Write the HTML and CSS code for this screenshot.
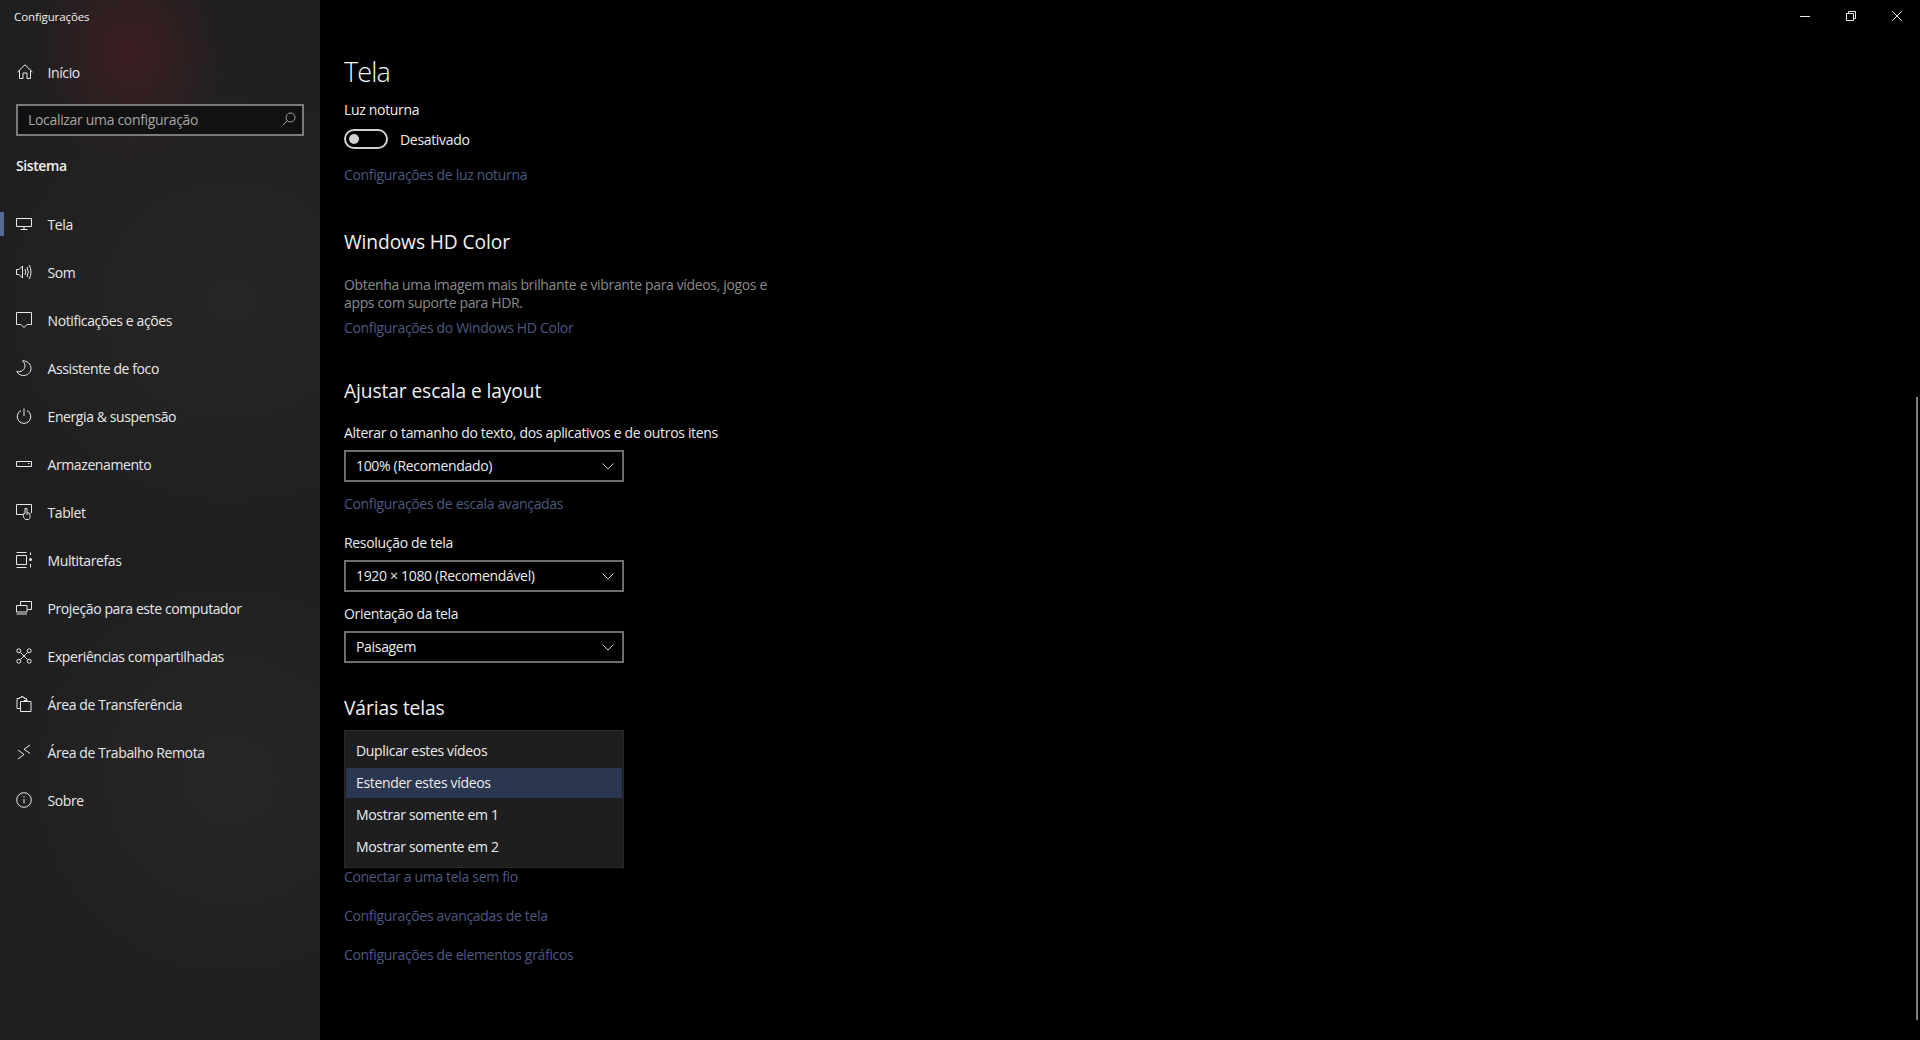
FILE: index.html
```html
<!DOCTYPE html>
<html lang="pt-BR">
<head>
<meta charset="utf-8">
<title>Configurações</title>
<link rel="stylesheet" href="styles.css">
</head>
<body>
<div class="app">
  <aside class="sidebar">
    <div class="app-title">Configurações</div>
    <div class="nav-item home">
      <svg class="icon home-icon" viewBox="0 0 16 16"><path d="M0.5 8 L8 0.8 L15.5 8 M2.5 6.5 V14.5 H6 V9 H10 V14.5 H13.5 V6.5"/></svg>
      <span class="nav-label">Início</span>
    </div>
    <div class="search">
      <span class="search-text">Localizar uma configuração</span>
      <svg class="search-icon" viewBox="0 0 14 14"><circle cx="8.5" cy="5.5" r="4.5"/><path d="M5.3 8.7 L1 13"/></svg>
    </div>
    <div class="section-title">Sistema</div>
    <nav class="nav">
      <div class="nav-item selected">
        <svg class="icon" viewBox="0 0 16 16"><path d="M0.5 2.5 H15.5 V10.5 H0.5 Z M8 10.5 V13.5 M4.5 13.5 H11.5"/></svg>
        <span class="nav-label">Tela</span>
      </div>
      <div class="nav-item">
        <svg class="icon" viewBox="0 0 16 16"><path d="M0.5 5.5 H3 L6.5 2 V14 L3 10.5 H0.5 Z M9 5 Q10.5 8 9 11 M11 3 Q13.5 8 11 13 M13.2 1 Q16.8 8 13.2 15"/></svg>
        <span class="nav-label">Som</span>
      </div>
      <div class="nav-item">
        <svg class="icon" viewBox="0 0 16 16"><path d="M0.5 0.5 H15.5 V12.5 H11 L8 15.5 L5 12.5 H0.5 Z"/></svg>
        <span class="nav-label">Notificações e ações</span>
      </div>
      <div class="nav-item">
        <svg class="icon" viewBox="0 0 16 16"><path d="M6.5 0.8 C11 0.5 15 4 15 8.5 C15 12.5 11.5 15.5 7.5 15.5 C4.5 15.5 2 14 0.8 11.5 C5.5 12.5 9 9.5 9 6 C9 4 8 2 6.5 0.8 Z"/></svg>
        <span class="nav-label">Assistente de foco</span>
      </div>
      <div class="nav-item">
        <svg class="icon" viewBox="0 0 16 16"><path d="M5 2.5 A6.8 6.8 0 1 0 11 2.5 M8 0.5 V8"/></svg>
        <span class="nav-label">Energia &amp; suspensão</span>
      </div>
      <div class="nav-item">
        <svg class="icon" viewBox="0 0 16 16"><path d="M0.5 5.5 H15.5 V10.5 H0.5 Z M12 7.5 H13.5"/></svg>
        <span class="nav-label">Armazenamento</span>
      </div>
      <div class="nav-item">
        <svg class="icon" viewBox="0 0 16 16"><path d="M7 10.5 H0.5 V0.5 H15.5 V9 M9.5 15.5 C8 14.5 7 12.5 7 10 L9 9.5 V4.5 H11 V8.5 L14 9.5 V12.5 C14 14 13.5 15 12.5 15.5 Z M11 8.5 V11"/></svg>
        <span class="nav-label">Tablet</span>
      </div>
      <div class="nav-item">
        <svg class="icon" viewBox="0 0 16 16"><path d="M0.5 0.5 H10.5 M0.5 15.5 H10.5 M0.5 3.5 H10.5 V12.5 H0.5 Z M14.5 0.5 V3 M14.5 12 V15.5"/><circle class="solid" cx="14.5" cy="7.5" r="1.5"/></svg>
        <span class="nav-label">Multitarefas</span>
      </div>
      <div class="nav-item">
        <svg class="icon" viewBox="0 0 16 16"><path d="M4.5 5 V1.5 H15.5 V9.5 H11.5 M0.5 5.5 H11 V12 H0.5 Z M0.5 14 H11"/></svg>
        <span class="nav-label">Projeção para este computador</span>
      </div>
      <div class="nav-item">
        <svg class="icon" viewBox="0 0 16 16"><circle cx="2.8" cy="2.8" r="2"/><circle cx="13.2" cy="2.8" r="2"/><circle cx="2.8" cy="13.2" r="2"/><circle cx="13.2" cy="13.2" r="2"/><path d="M4.3 4.3 L11.7 11.7 M11.7 4.3 L4.3 11.7"/></svg>
        <span class="nav-label">Experiências compartilhadas</span>
      </div>
      <div class="nav-item">
        <svg class="icon" viewBox="0 0 16 16"><path d="M4.5 12.5 H1 V2.5 H3.5 V1.5 H5.5 V0.5 H7 V1.5 H8.5 V2.5 H10.5 V5 M4.5 5.5 H15 V15.5 H4.5 Z M8 5.5 V4.5 H11.5 V5.5"/></svg>
        <span class="nav-label">Área de Transferência</span>
      </div>
      <div class="nav-item">
        <svg class="icon" viewBox="0 0 16 16"><path d="M2 6 L8 10.5 L2 15 M14 1 L8 5.3 L14 9.3"/></svg>
        <span class="nav-label">Área de Trabalho Remota</span>
      </div>
      <div class="nav-item">
        <svg class="icon" viewBox="0 0 16 16"><circle cx="8" cy="8" r="7.3"/><path d="M8 7 V11.5"/><circle class="solid" cx="8" cy="4.8" r="0.7"/></svg>
        <span class="nav-label">Sobre</span>
      </div>
    </nav>
  </aside>
  <main class="main">
    <div class="window-controls">
      <svg class="win-icon" viewBox="0 0 10 10"><path d="M0 5.5 H10"/></svg>
      <svg class="win-icon" viewBox="0 0 10 10"><path d="M0.5 2.5 H7.5 V9.5 H0.5 Z M2.5 2.5 V0.5 H9.5 V7.5 H7.5"/></svg>
      <svg class="win-icon" viewBox="0 0 10 10"><path d="M0.2 0.2 L9.8 9.8 M9.8 0.2 L0.2 9.8"/></svg>
    </div>
    <div class="content">
      <h1 class="page-title">Tela</h1>
      <div class="text mt8">Luz noturna</div>
      <div class="toggle-row">
        <span class="toggle"><span class="knob"></span></span>
        <span class="text toggle-label">Desativado</span>
      </div>
      <a class="link mt16">Configurações de luz noturna</a>

      <h2 class="heading mt43">Windows HD Color</h2>
      <p class="desc">Obtenha uma imagem mais brilhante e vibrante para vídeos, jogos e<br>apps com suporte para HDR.</p>
      <a class="link mt6">Configurações do Windows HD Color</a>

      <h2 class="heading mt39">Ajustar escala e layout</h2>
      <div class="text mt18">Alterar o tamanho do texto, dos aplicativos e de outros itens</div>
      <div class="select">
        <span>100% (Recomendado)</span>
        <svg class="chevron" viewBox="0 0 12 7"><path d="M0.5 0.5 L6 6 L11.5 0.5"/></svg>
      </div>
      <a class="link mt12">Configurações de escala avançadas</a>

      <div class="text mt19">Resolução de tela</div>
      <div class="select">
        <span>1920 × 1080 (Recomendável)</span>
        <svg class="chevron" viewBox="0 0 12 7"><path d="M0.5 0.5 L6 6 L11.5 0.5"/></svg>
      </div>
      <div class="text mt12">Orientação da tela</div>
      <div class="select">
        <span>Paisagem</span>
        <svg class="chevron" viewBox="0 0 12 7"><path d="M0.5 0.5 L6 6 L11.5 0.5"/></svg>
      </div>

      <h2 class="heading mt31">Várias telas</h2>
      <div class="menu-slot">
        <ul class="menu">
          <li class="menu-item">Duplicar estes vídeos</li>
          <li class="menu-item active">Estender estes vídeos</li>
          <li class="menu-item">Mostrar somente em 1</li>
          <li class="menu-item">Mostrar somente em 2</li>
        </ul>
      </div>
      <a class="link">Conectar a uma tela sem fio</a>
      <a class="link mt19">Configurações avançadas de tela</a>
      <a class="link mt19">Configurações de elementos gráficos</a>
    </div>
    <div class="scroll-thumb"></div>
  </main>
</div>
</body>
</html>
```
FILE: styles.css
```css
* { box-sizing: border-box; }
html, body { margin: 0; height: 100%; background: #000; overflow: hidden; }
body { font-family: "Open Sans", "Noto Sans", "Liberation Sans", sans-serif; font-size: 14px; letter-spacing: -0.32px; color: #ececec; }
.app { display: flex; height: 1040px; }

.sidebar {
  width: 320px; flex: none; padding: 0;
  background:
    radial-gradient(ellipse 100px 115px at 130px 52px, rgba(100, 28, 38, .42), rgba(100, 28, 38, 0) 100%),
    radial-gradient(ellipse 280px 260px at 230px 300px, rgba(255, 255, 255, .03), rgba(255, 255, 255, 0) 100%),
    radial-gradient(ellipse 240px 240px at 230px 780px, rgba(255, 255, 255, .035), rgba(255, 255, 255, 0) 100%),
    #1f1f1f;
}
.app-title { height: 34px; line-height: 33px; padding-left: 14px; font-size: 11.5px; letter-spacing: -0.1px; color: #f0f0f0; }
.nav-item { position: relative; display: flex; align-items: center; gap: 15.5px; height: 48px; padding: 0 0 2px 16px; letter-spacing: -0.4px; color: #e8e8e8; }
.home { margin-top: 15px; }
.icon { width: 16px; height: 16px; flex: none; fill: none; stroke: #e8e8e8; stroke-width: 1; }
.home-icon { margin-left: 1px; margin-right: -1px; }
.icon .solid { fill: #e8e8e8; stroke: none; }
.nav-label { white-space: nowrap; }
.search {
  display: flex; align-items: center; justify-content: space-between;
  width: 288px; height: 32px; margin: 7px 0 0 16px; padding: 0 6px 2px 10px;
  background: #111; border: 2px solid #7b7b7b; color: #a6a6a6;
}
.search-icon { width: 14px; height: 14px; fill: none; stroke: #a6a6a6; stroke-width: 1; }
.section-title { margin: 20px 0 0 16px; height: 20px; line-height: 20px; font-weight: 600; letter-spacing: -0.4px; color: #f0f0f0; }
.nav { margin-top: 25px; }
.selected::before { content: ""; position: absolute; left: 0; top: 11px; width: 4px; height: 24px; background: #5a6a96; }

.main { position: relative; flex: 1; min-width: 0; }
.window-controls { display: flex; justify-content: flex-end; gap: 36px; height: 32px; padding: 11px 18px 0 0; }
.win-icon { width: 10px; height: 10px; fill: none; stroke: #e6e6e6; stroke-width: 1; }
.content { display: flex; flex-direction: column; align-items: flex-start; padding: 20px 0 0 24px; }
.page-title { margin: 0; height: 40px; line-height: 39px; font-size: 27px; font-weight: 300; letter-spacing: -0.9px; color: #f6f6f6; }
.text { height: 20px; line-height: 20px; white-space: nowrap; color: #ececec; }
.toggle-row { display: flex; align-items: center; gap: 12px; height: 20px; margin-top: 9px; }
.toggle-label { padding-top: 1px; }
.toggle { display: flex; align-items: center; width: 44px; height: 20px; padding-left: 3px; border: 2px solid #cfcfcf; border-radius: 10px; }
.knob { width: 10px; height: 10px; border-radius: 50%; background: #cfcfcf; }
.link { display: block; height: 20px; line-height: 20px; white-space: nowrap; color: #4c587e; }
.heading { margin: 0; height: 28px; line-height: 28px; font-size: 19.2px; font-weight: 400; letter-spacing: -0.1px; color: #f0f0f0; }
.desc { margin: 20px 0 0; line-height: 18px; letter-spacing: -0.35px; color: #8a8a8a; white-space: nowrap; }
.select {
  display: flex; align-items: center; justify-content: space-between;
  width: 280px; height: 32px; margin-top: 7px; padding: 0 8px 2px 10px;
  border: 2px solid #6e6e6e; background: #000; color: #ececec;
}
.chevron { width: 12px; height: 7px; margin-top: 2px; fill: none; stroke: #cfcfcf; stroke-width: 1; }
.menu-slot { position: relative; width: 280px; height: 137px; margin-top: 8px; }
.menu { position: absolute; left: 0; top: 0; width: 280px; height: 138px; margin: 0; padding: 4px 1px; list-style: none; background: #1e1e1e; border: 1px solid #2a2a2a; }
.menu-item { height: 32px; line-height: 31px; padding-left: 10px; color: #ececec; }
.menu-item.active { height: 30px; line-height: 29px; margin: 1px 0; background: #2b3650; }

.mt6 { margin-top: 6px; }
.mt8 { margin-top: 8px; }
.mt12 { margin-top: 12px; }
.mt16 { margin-top: 16px; }
.mt18 { margin-top: 18px; }
.mt19 { margin-top: 19px; }
.mt31 { margin-top: 31px; }
.mt39 { margin-top: 39px; }
.mt43 { margin-top: 43px; }

.scroll-thumb { position: absolute; right: 2px; top: 397px; width: 2px; height: 623px; background: #7e7e7e; }
```
